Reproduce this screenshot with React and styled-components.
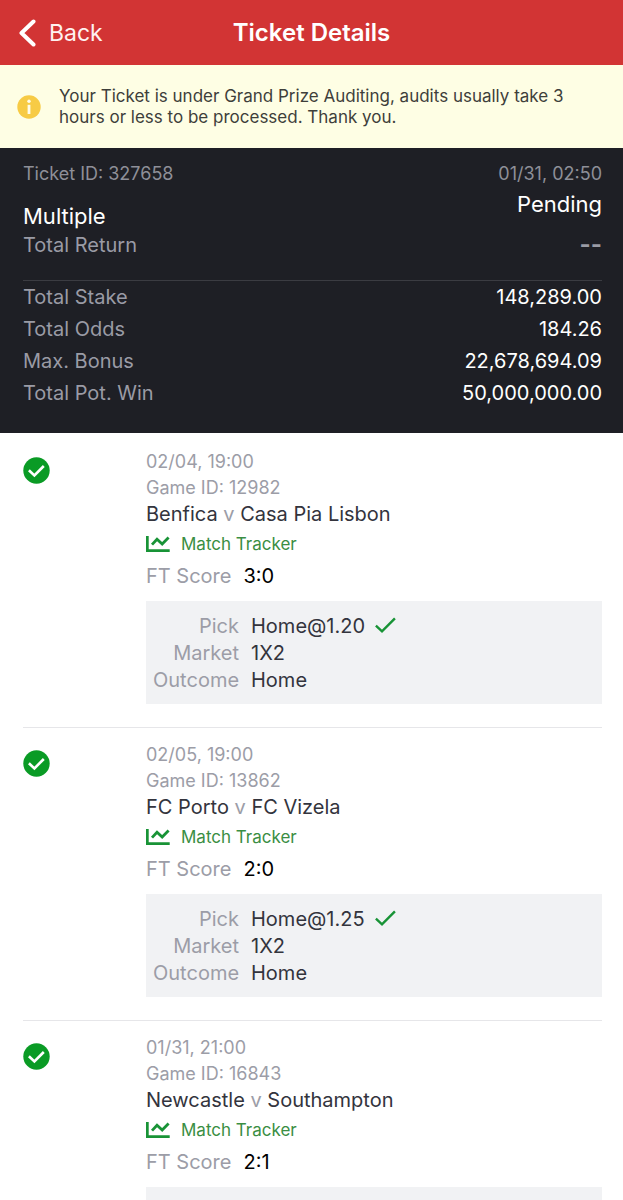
import React from 'react';
import styled, { createGlobalStyle } from 'styled-components';

const GlobalStyle = createGlobalStyle`
    * {
        box-sizing: border-box;
        margin: 0;
        padding: 0;
    }

    body {
        font-family: Inter, "Liberation Sans", sans-serif;
        background-color: #FFFFFF;
    }
`;

const Page = styled.div`
    display: flex;
    flex-direction: column;
    width: 100%;
    height: 100vh;
`;

const Header = styled.header`
    display: grid;
    grid-template-columns: 1fr auto 1fr;
    align-items: center;
    flex-shrink: 0;
    height: 65px;
    padding: 0px 18px;
    background-color: #D23434;
`;

const BackButton = styled.button`
    display: flex;
    align-items: center;
    gap: 12px;
    justify-self: start;
    border: none;
    background: none;
    font-family: inherit;
    font-size: 23px;
    line-height: 28px;
    color: #FFF1F0;
    cursor: pointer;
`;

const HeaderTitle = styled.h1`
    font-weight: 600;
    font-size: 24px;
    line-height: 28px;
    color: #FFFFFF;
`;

const Notice = styled.div`
    display: flex;
    align-items: center;
    flex-shrink: 0;
    gap: 18px;
    padding: 21px 40px 20px 17px;
    background-color: #FEFEE4;

    svg {
        flex-shrink: 0;
    }
`;

const NoticeText = styled.p`
    font-size: 17px;
    line-height: 21px;
    color: #3E3F3B;
`;

const Summary = styled.section`
    flex-shrink: 0;
    padding: 12px 21px 24px 23px;
    background-color: #1E1F25;
`;

const SummaryTop = styled.div`
    display: flex;
    justify-content: space-between;
    align-items: flex-end;
    padding-bottom: 20px;
    border-bottom: 1px solid #3B3C42;
`;

const SummaryColumn = styled.div`
    display: flex;
    flex-direction: column;
    align-items: ${({ $right }) => $right ? 'flex-end' : 'flex-start'};
`;

const SummaryMeta = styled.p`
    font-size: 18px;
    line-height: 28px;
    color: #8E8F98;
`;

const TicketType = styled.p`
    margin-top: 14px;
    font-size: 22px;
    line-height: 28px;
    color: #FFFFFF;
`;

const TicketStatus = styled.p`
    margin-bottom: 10px;
    font-size: 22px;
    line-height: 32px;
    color: #FFFFFF;
`;

const TotalReturn = styled.p`
    font-size: ${({ $bold }) => $bold ? 24 : 20}px;
    line-height: 30px;
    font-weight: ${({ $bold }) => $bold ? 700 : 400};
    color: #9A9BA5;
`;

const Totals = styled.dl`
    display: flex;
    flex-direction: column;
`;

const TotalRow = styled.div`
    display: flex;
    justify-content: space-between;
    font-size: 20px;
    line-height: 32px;
`;

const TotalLabel = styled.dt`
    color: #9A9BA5;
`;

const TotalValue = styled.dd`
    color: #FFFFFF;
`;

const Games = styled.ul`
    flex: 1;
    min-height: 0;
    padding: 2px 21px 0px 23px;
    overflow-y: auto;
    scrollbar-width: none;
    list-style: none;
`;

const GameItem = styled.li`
    display: grid;
    grid-template-columns: 123px 1fr;
    padding: 14px 0px 23px 0px;
    border-bottom: 1px solid #E6E6E9;
`;

const GameStatus = styled.div`
    padding-top: 8px;

    svg {
        display: block;
    }
`;

const GameMeta = styled.p`
    font-size: 18px;
    line-height: 26px;
    color: #9C9DA7;
`;

const GameTeams = styled.h2`
    font-weight: 400;
    font-size: 20px;
    line-height: 26px;
    color: #33343D;

    span {
        color: #9C9DA7;
    }
`;

const TrackerLink = styled.a`
    display: flex;
    align-items: center;
    gap: 11px;
    height: 34px;
    font-size: 17px;
    color: #3A8E43;
    text-decoration: none;
`;

const Score = styled.p`
    display: flex;
    gap: 12px;
    font-size: 20px;
    line-height: 30px;
    color: #9C9DA7;

    strong {
        font-weight: 400;
        color: #000000;
    }
`;

const Bet = styled.dl`
    display: grid;
    grid-template-columns: 86px 1fr;
    column-gap: 12px;
    margin-top: 10px;
    padding: 12px 7px 10px 7px;
    font-size: 20px;
    line-height: 27px;
    background-color: #F1F2F4;
`;

const BetLabel = styled.dt`
    text-align: right;
    color: #9C9DA7;
`;

const BetValue = styled.dd`
    display: flex;
    align-items: center;
    gap: 10px;
    color: #33343D;
`;

const BackIcon = () => (
    <svg width="19" height="28" viewBox="0 0 19 28" fill="none" aria-hidden="true">
        <path d="M15.5 2.5L3.5 14L15.5 25.5" stroke="#FFFFFF" strokeWidth="4" strokeLinecap="round" strokeLinejoin="round" />
    </svg>
);

const InfoIcon = () => (
    <svg width="24" height="24" viewBox="0 0 24 24" aria-hidden="true">
        <circle cx="12" cy="12" r="11.7" fill="#F7CB45" />
        <circle cx="12" cy="6.2" r="1.7" fill="#FFFDEB" />
        <rect x="10.6" y="9.8" width="2.8" height="9.2" fill="#FFFDEB" />
    </svg>
);

const WonIcon = () => (
    <svg width="27" height="27" viewBox="0 0 27 27" fill="none" role="img" aria-label="Won">
        <circle cx="13.5" cy="13.5" r="13.2" fill="#0A9B25" />
        <path d="M5.9 13.2L11.4 18.4L20.8 9" stroke="#FFFFFF" strokeWidth="2.6" />
    </svg>
);

const TrackerIcon = () => (
    <svg width="24" height="18" viewBox="0 0 24 18" fill="none" aria-hidden="true">
        <path d="M1.3 1V15.6H23.7" stroke="#189336" strokeWidth="2.8" />
        <path d="M6 9.6L11 4.2L16.2 9L22.6 2.6" stroke="#189336" strokeWidth="2.8" />
    </svg>
);

const PickIcon = () => (
    <svg width="22" height="20" viewBox="0 0 22 20" fill="none" aria-hidden="true">
        <path d="M0.9 8.6L7 14.4L19.9 1.4" stroke="#189336" strokeWidth="2.4" />
    </svg>
);

const totals = [
    { label: 'Total Stake', value: '148,289.00' },
    { label: 'Total Odds', value: '184.26' },
    { label: 'Max. Bonus', value: '22,678,694.09' },
    { label: 'Total Pot. Win', value: '50,000,000.00' },
];

const games = [
    { id: '12982', date: '02/04, 19:00', home: 'Benfica', away: 'Casa Pia Lisbon', score: '3:0', pick: 'Home@1.20' },
    { id: '13862', date: '02/05, 19:00', home: 'FC Porto', away: 'FC Vizela', score: '2:0', pick: 'Home@1.25' },
    { id: '16843', date: '01/31, 21:00', home: 'Newcastle', away: 'Southampton', score: '2:1' },
];

function Game({ game }) {
    return (
        <GameItem>
            <GameStatus>
                <WonIcon />
            </GameStatus>
            <div>
                <GameMeta>{game.date}</GameMeta>
                <GameMeta>Game ID: {game.id}</GameMeta>
                <GameTeams>{game.home} <span>v</span> {game.away}</GameTeams>
                <TrackerLink href="#tracker">
                    <TrackerIcon />
                    Match Tracker
                </TrackerLink>
                <Score>FT Score <strong>{game.score}</strong></Score>
                <Bet>
                    {
                        game.pick
                            ? <>
                                <BetLabel>Pick</BetLabel>
                                <BetValue>{game.pick} <PickIcon /></BetValue>
                                <BetLabel>Market</BetLabel>
                                <BetValue>1X2</BetValue>
                                <BetLabel>Outcome</BetLabel>
                                <BetValue>Home</BetValue>
                            </>
                            : <></>
                    }
                </Bet>
            </div>
        </GameItem>
    );
}

export default function App() {
    return (
        <>
            <GlobalStyle />
            <Page>
                <Header>
                    <BackButton type="button">
                        <BackIcon />
                        Back
                    </BackButton>
                    <HeaderTitle>Ticket Details</HeaderTitle>
                </Header>

                <Notice>
                    <InfoIcon />
                    <NoticeText>
                        Your Ticket is under Grand Prize Auditing, audits usually take 3 hours or less to be processed. Thank you.
                    </NoticeText>
                </Notice>

                <Summary>
                    <SummaryTop>
                        <SummaryColumn>
                            <SummaryMeta>Ticket ID: 327658</SummaryMeta>
                            <TicketType>Multiple</TicketType>
                            <TotalReturn>Total Return</TotalReturn>
                        </SummaryColumn>
                        <SummaryColumn $right>
                            <SummaryMeta>01/31, 02:50</SummaryMeta>
                            <TicketStatus>Pending</TicketStatus>
                            <TotalReturn $bold>--</TotalReturn>
                        </SummaryColumn>
                    </SummaryTop>
                    <Totals>
                        {totals.map(({ label, value }) => (
                            <TotalRow key={label}>
                                <TotalLabel>{label}</TotalLabel>
                                <TotalValue>{value}</TotalValue>
                            </TotalRow>
                        ))}
                    </Totals>
                </Summary>

                <Games>
                    {games.map((game) => <Game key={game.id} game={game} />)}
                </Games>
            </Page>
        </>
    );
}
